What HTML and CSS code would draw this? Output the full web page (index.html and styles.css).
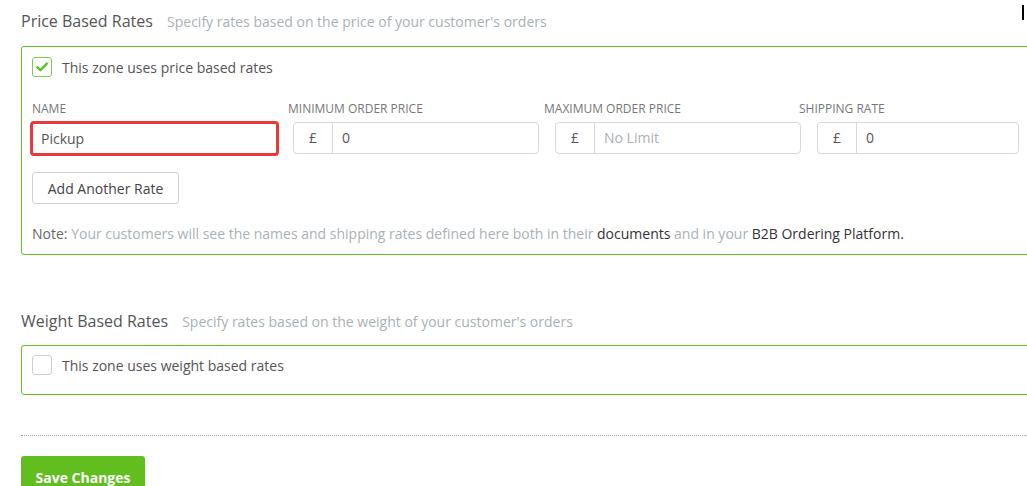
FILE: index.html
```html
<!DOCTYPE html>
<html>
<head>
<meta charset="utf-8">
<link rel="stylesheet" href="styles.css">
</head>
<body>
<div class="page">
  <h2 class="section-title">Price Based Rates <span class="sub">Specify rates based on the price of your customer's orders</span></h2>
  <div class="panel">
    <label class="check-row">
      <span class="checkbox checked">
        <svg width="14" height="14" viewBox="0 0 14 14"><polyline points="2.2,7.2 5.4,10.2 11.8,3.6" fill="none" stroke="#5fbf2a" stroke-width="2.4" stroke-linecap="round" stroke-linejoin="round"/></svg>
      </span>
      <span class="check-text">This zone uses price based rates</span>
    </label>
    <div class="labels">
      <span class="lbl">Name</span>
      <span class="lbl">Minimum Order Price</span>
      <span class="lbl">Maximum Order Price</span>
      <span class="lbl">Shipping Rate</span>
    </div>
    <div class="inputs">
      <div class="field name-field">Pickup</div>
      <div class="field group g-min"><span class="prefix">£</span><span class="val">0</span></div>
      <div class="field group g-max"><span class="prefix">£</span><span class="val placeholder">No Limit</span></div>
      <div class="field group g-ship"><span class="prefix">£</span><span class="val">0</span></div>
    </div>
    <button class="btn-default">Add Another Rate</button>
    <p class="note"><span class="note-label">Note:</span> Your customers will see the names and shipping rates defined here both in their <span class="dark">documents</span> and in your <span class="dark">B2B Ordering Platform.</span></p>
  </div>

  <h2 class="section-title second">Weight Based Rates <span class="sub">Specify rates based on the weight of your customer's orders</span></h2>
  <div class="panel panel-small">
    <label class="check-row">
      <span class="checkbox"></span>
      <span class="check-text">This zone uses weight based rates</span>
    </label>
  </div>

  <div class="divider"></div>
  <button class="btn-save">Save Changes</button>
</div>
<div class="cursor-mark"></div>
</body>
</html>
```
FILE: styles.css
```css
html, body {
  margin: 0;
  padding: 0;
  overflow: hidden;
  background: #fff;
}
body {
  font-family: "Open Sans", "Liberation Sans", sans-serif;
  color: #555;
  width: 1027px;
  height: 486px;
  position: relative;
}
.page {
  padding: 10px 0 0 21px;
  width: 1040px;
}
.section-title {
  margin: 0 0 13px 0;
  font-size: 16px;
  font-weight: 400;
  line-height: 22px;
  color: #555;
}
.section-title.second {
  margin-top: 55px;
  margin-bottom: 12px;
}
.sub {
  font-size: 14px;
  color: #a9b1b6;
  margin-left: 10px;
}
.panel {
  border: 1px solid #62c11e;
  border-radius: 3px;
  padding: 10px 10px 10px 10px;
  width: 1010px;
}
.panel-small {
  padding-top: 9px;
  padding-bottom: 19px;
}
.check-row {
  display: flex;
  align-items: center;
  height: 20px;
  gap: 10px;
}
.checkbox {
  width: 18px;
  height: 18px;
  border: 1px solid #c9cfd2;
  border-radius: 3px;
  display: flex;
  align-items: center;
  justify-content: center;
  box-sizing: content-box;
}
.checkbox.checked {
  border-color: #7ccb4c;
}
.check-text {
  font-size: 14px;
  color: #555;
}
.labels {
  display: grid;
  grid-template-columns: 256px 256px 255px 200px;
  margin-top: 24px;
  height: 16px;
}
.lbl {
  font-size: 12px;
  line-height: 16px;
  text-transform: uppercase;
  color: #777;
}
.inputs {
  display: flex;
  margin-top: 5px;
  height: 32px;
  align-items: center;
}
.field {
  box-sizing: border-box;
  height: 32px;
  border: 1px solid #d3d9dc;
  border-radius: 4px;
  font-size: 14px;
  color: #555;
}
.name-field {
  width: 249px;
  height: 35px;
  margin-left: -2px;
  margin-top: 1px;
  border: 3px solid #e8393a;
  border-radius: 4px;
  padding-left: 8px;
  line-height: 29px;
}
.group {
  display: flex;
  width: 246px;
}
.g-min { margin-left: 14px; }
.g-max { margin-left: 16px; }
.g-ship { margin-left: 16px; width: 202px; }
.prefix {
  width: 38px;
  border-right: 1px solid #d3d9dc;
  text-align: center;
  line-height: 30px;
  color: #555;
}
.val {
  padding-left: 9px;
  line-height: 30px;
}
.placeholder {
  color: #a9b1b6;
}
.btn-default {
  display: block;
  margin-top: 18px;
  height: 32px;
  padding: 0 14px;
  background: #fff;
  border: 1px solid #cdd2d5;
  border-radius: 3px;
  font-family: "Open Sans", "Liberation Sans", sans-serif;
  font-size: 14px;
  color: #444;
  width: 147px;
}
.note {
  margin: 20px 0 0 0;
  font-size: 14px;
  line-height: 20px;
  color: #a9b1b6;
}
.note-label {
  color: #666;
}
.dark {
  color: #333;
}
.divider {
  margin-top: 40px;
  border-top: 1px dotted #a9a9a9;
  width: 1020px;
}
.btn-save {
  margin-top: 20px;
  width: 124px;
  height: 44px;
  padding: 12px 0 0 0;
  background: #62bd1f;
  border: none;
  border-radius: 3px;
  color: #fff;
  font-family: "Open Sans", "Liberation Sans", sans-serif;
  font-size: 14px;
  font-weight: 700;
  line-height: 20px;
  box-sizing: border-box;
  display: flex;
  justify-content: center;
  align-items: flex-start;
}
.cursor-mark {
  position: absolute;
  left: 1022px;
  top: 5px;
  width: 2px;
  height: 15px;
  background: #000;
}
```
